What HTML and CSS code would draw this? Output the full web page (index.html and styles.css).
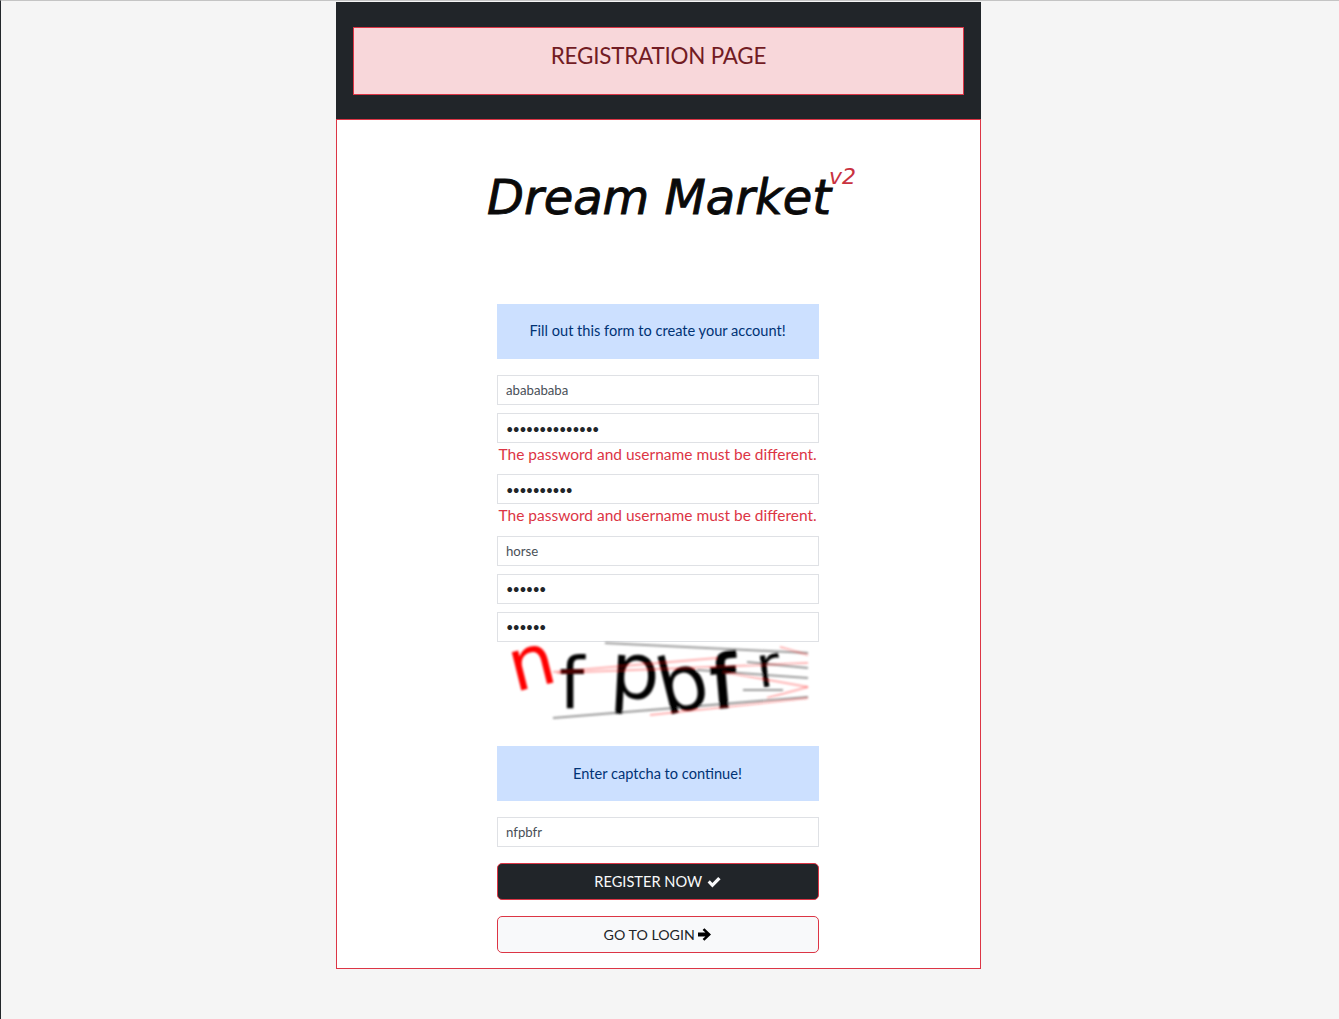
FILE: index.html
```html
<!DOCTYPE html>
<html lang="en">
<head>
    <meta charset="UTF-8">
    <title>Registration Page</title>
    <link rel="stylesheet" href="styles.css">
</head>
<body>
    <div class="wrapper">
        <header class="top">
            <h1 class="alert-title">REGISTRATION PAGE</h1>
        </header>
        <main class="panel">
            <!-- logo -->
            <svg class="logo" width="400" height="70" viewBox="0 0 400 70">
                <text class="logo-text" x="28" y="56" textLength="344" lengthAdjust="spacingAndGlyphs">Dream Market</text>
                <text class="logo-ver" x="370" y="26" textLength="27" lengthAdjust="spacingAndGlyphs">v2</text>
            </svg>
            <form class="form">
                <div class="info">Fill out this form to create your account!</div>
                <input class="field first" type="text" value="ababababa">
                <input class="field secret" type="password" value="abcdefghijklmn">
                <div class="error">The password and username must be different.</div>
                <input class="field secret" type="password" value="abcdefghij">
                <div class="error">The password and username must be different.</div>
                <input class="field" type="text" value="horse">
                <input class="field secret secret-pin" type="password" value="abcdef">
                <input class="field secret secret-pin" type="password" value="abcdef">
                <!-- captcha -->
                <svg class="captcha" width="311" height="80" viewBox="0 0 311 80">
                    <defs>
                        <filter id="soft"><feGaussianBlur stdDeviation="0.8"/></filter>
                    </defs>
                    <g filter="url(#soft)">
                        <g class="c-gray">
                            <line x1="108" y1="1" x2="311" y2="11"/>
                            <line x1="56" y1="76" x2="311" y2="55"/>
                            <line x1="200" y1="28" x2="311" y2="36"/>
                            <line x1="246" y1="48" x2="286" y2="48"/>
                            <line x1="250" y1="20" x2="311" y2="26"/>
                        </g>
                        <text class="c-red" transform="translate(18 50) rotate(-14)">n</text>
                        <text class="c-black" transform="translate(62 66)">f</text>
                        <text class="c-black c-big" transform="translate(112 55) rotate(3)">p</text>
                        <text class="c-black c-big" transform="translate(168 74) rotate(-14)">b</text>
                        <text class="c-black c-heavy" transform="translate(216 66) rotate(-5)">f</text>
                        <text class="c-black c-small" transform="translate(262 46) rotate(-8)">r</text>
                        <g class="c-pink">
                            <line x1="56" y1="30" x2="220" y2="16"/>
                            <line x1="60" y1="31" x2="311" y2="21"/>
                            <line x1="153" y1="73" x2="311" y2="56"/>
                            <line x1="283" y1="5" x2="311" y2="13"/>
                            <line x1="226" y1="30" x2="311" y2="45"/>
                            <line x1="311" y1="45" x2="270" y2="56"/>
                        </g>
                    </g>
                </svg>
                <div class="info info-captcha">Enter captcha to continue!</div>
                <input class="field first" type="text" value="nfpbfr">
                <button class="btn btn-dark" type="button">REGISTER NOW
                    <svg class="icon icon-check" width="14" height="12" viewBox="0 0 14 12"><path d="M.6 6.5 L2.8 4.3 L5.4 6.9 L11.2 .9 L13.6 3.2 L5.4 11.4 Z"/></svg>
                </button>
                <button class="btn btn-light" type="button">GO TO LOGIN
                    <svg class="icon" width="13" height="13" viewBox="0 0 13 13"><path d="M6.4 .2 L13 6.5 L6.4 12.8 L4.6 11 L7.4 8.4 H0 V4.6 H7.4 L4.6 2 Z"/></svg>
                </button>
            </form>
        </main>
    </div>
</body>
</html>
```
FILE: styles.css
```css
html, body {
    height: 100%;
}
body {
    margin: 0;
    background-color: #f5f5f5;
    border-top: 1px solid #c4c4c4;
    border-left: 1px solid #23272b;
    box-sizing: border-box;
    font-family: "Lato", "Noto Sans", sans-serif;
    color: #212529;
    overflow: hidden;
}
.wrapper {
    width: 645px;
    margin: 1px 0 0 335px;
}
.top {
    background-color: #212529;
    padding: 25px 17px 24px;
    height: 118px;
    box-sizing: border-box;
}
.alert-title {
    margin: 0;
    height: 68px;
    box-sizing: border-box;
    border: 1px solid #dc3545;
    background-color: #f8d7da;
    color: #721c24;
    font-size: 22.4px;
    font-weight: 400;
    letter-spacing: -.2px;
    line-height: 56px;
    text-align: center;
}
.panel {
    background-color: #fff;
    border: 1px solid #dc3545;
    margin-top: -1px;
    height: 850px;
    box-sizing: border-box;
    display: flex;
    flex-direction: column;
    align-items: center;
}
.logo {
    margin-top: 38px;
    flex: none;
}
.logo-text {
    font-family: "DejaVu Sans", sans-serif;
    font-style: italic;
    font-size: 48px;
    fill: #0a0a0a;
    stroke: #0a0a0a;
    stroke-width: .9;
}
.logo-ver {
    font-family: "DejaVu Sans", sans-serif;
    font-style: italic;
    font-size: 21px;
    fill: #c9323f;
}
.form {
    width: 322px;
    margin: 76px 2px 0 0;
    display: flex;
    flex-direction: column;
}
.info {
    height: 55px;
    background-color: #cce0ff;
    color: #003375;
    font-size: 14.6px;
    line-height: 54px;
    text-align: center;
}
.info-captcha {
    margin-top: 24px;
    line-height: 56px;
}
.field {
    height: 30px;
    box-sizing: border-box;
    border: 1px solid #dfe1e5;
    padding: 0 9px 0 8.5px;
    margin-top: 8px;
    font-family: inherit;
    font-size: 13.2px;
    color: #495057;
    background-color: #fff;
    outline: none;
}
.field.first {
    margin-top: 16px;
}
.secret {
    color: #212529;
    font-size: 12.8px;
    letter-spacing: -.8px;
    padding-top: 2px;
}
.secret-pin {
    padding-top: 0;
}
.error {
    height: 23.4px;
    color: #dc3545;
    font-size: 15.5px;
    line-height: 23px;
    padding-left: 2px;
    white-space: nowrap;
}
.captcha {
    display: block;
    flex: none;
    overflow: visible;
}
.c-gray line {
    stroke: #9a9a9a;
    stroke-width: 2;
}
.c-pink line {
    stroke: #ff0000;
    stroke-width: 2;
    opacity: .3;
}
.c-red, .c-black {
    font-family: "DejaVu Sans", sans-serif;
    font-size: 72px;
}
.c-red {
    fill: #ff0000;
}
.c-black {
    fill: #000;
}
.c-big {
    font-size: 78px;
}
.c-heavy {
    stroke: #000;
    stroke-width: 2.5;
}
.c-small {
    font-size: 58px;
}
.btn {
    height: 37px;
    margin-top: 16px;
    border: 1px solid #dc3545;
    border-radius: 5px;
    font-family: inherit;
    font-size: 14.6px;
    cursor: pointer;
}
.btn-dark {
    background-color: #212529;
    color: #f8f9fa;
    fill: #f8f9fa;
}
.btn-light {
    background-color: #f8f9fa;
    color: #212529;
    fill: #000;
    font-size: 14.2px;
}
.icon {
    vertical-align: -1px;
}
.icon-check {
    margin-left: 1px;
}
```
